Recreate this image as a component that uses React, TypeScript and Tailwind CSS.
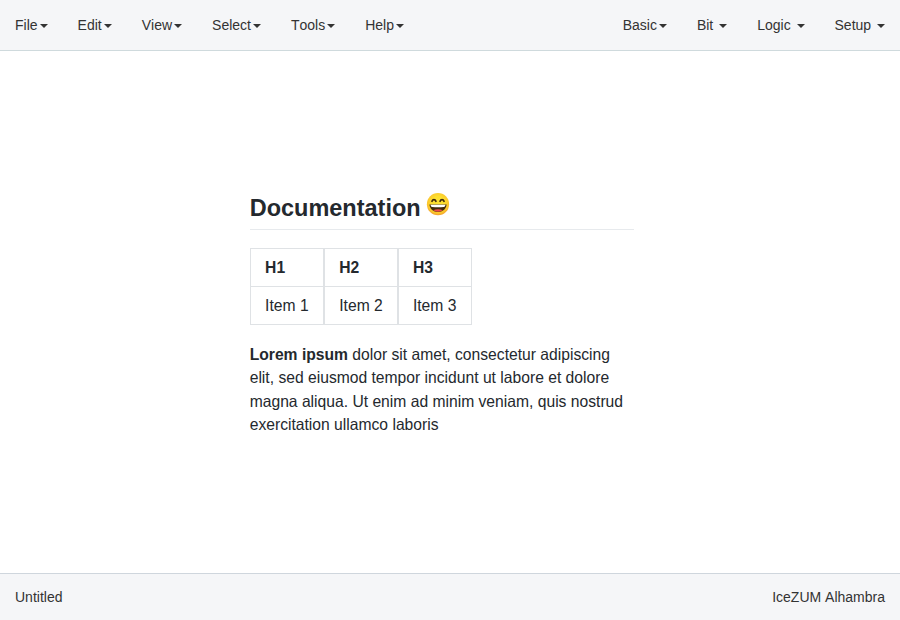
import React from "react";

const left = ["File", "Edit", "View", "Select", "Tools", "Help"];
const right = ["Basic", "Bit ", "Logic ", "Setup "];

function Menu({ label }: { label: string }) {
  return (
    <li className="flex items-center whitespace-pre px-[15px] py-[15px]">
      <span>{label}</span>
      <span className="ml-[2px] mt-[2px] h-0 w-0 border-x-4 border-t-4 border-x-transparent border-t-[#333]" />
    </li>
  );
}

function Smile() {
  return (
    <svg className="ml-[5.5px] mt-[2px] h-6 w-6" viewBox="0 0 24 24">
      <defs>
        <radialGradient id="face" cx="50%" cy="42%" r="58%">
          <stop offset="0.45" stopColor="#fde030" />
          <stop offset="0.85" stopColor="#fbc32c" />
          <stop offset="1" stopColor="#f09a2b" />
        </radialGradient>
      </defs>
      <circle cx="12" cy="12.2" r="11.1" fill="url(#face)" />
      <path d="M6 9.2C6.8 7.1 9.1 7.1 9.9 9.2M14.1 9.2c.8-2.1 3.1-2.1 3.9 0" fill="none" stroke="#422b0d" strokeWidth="1.8" strokeLinecap="round" />
      <path d="M3.4 12.5h17.2c-.5 4.6-4 7.5-8.6 7.5s-8.1-2.9-8.6-7.5z" fill="#422b0d" />
      <path d="M7.2 18.3c2.7-1.5 6.9-1.5 9.6 0-2.6 1.9-7 1.9-9.6 0z" fill="#ed4b4b" />
      <path d="M4.6 12.8h14.8c0 1.3-.5 2-1.6 2.1-3.8.4-7.8.4-11.6 0-1.1-.1-1.6-.8-1.6-2.1z" fill="#fff" />
    </svg>
  );
}

export default function App() {
  return (
    <div className="flex h-[620px] w-[900px] flex-col overflow-hidden bg-white font-['Liberation_Sans',Arial,sans-serif] text-sm leading-5 text-[#333] [font-kerning:none]">
      <nav className="flex h-[51px] justify-between border-b border-[#cfdadd] bg-[#f5f6f8]">
        <ul className="flex">{left.map((l) => <Menu key={l} label={l} />)}</ul>
        <ul className="flex">{right.map((l) => <Menu key={l} label={l} />)}</ul>
      </nav>
      <main className="flex-1 pl-[249.7px] pt-[139px] text-[15.66px] leading-[23.49px] text-[#24292e]">
        <article className="w-[384px]">
          <h2 className="flex h-[40px] items-start border-b border-[#e7eaed] text-[23.49px] font-bold leading-9">
            <span>Documentation</span>
            <Smile />
          </h2>
          <table className="mt-[18px] w-[222px] table-fixed border-collapse">
            <thead>
              <tr>{["H1", "H2", "H3"].map((h) => <th key={h} className="h-[38px] border border-[#dfe2e5] p-0 pl-[14.4px] text-left font-bold not-first:border-l-2">{h}</th>)}</tr>
            </thead>
            <tbody>
              <tr>{["Item 1", "Item 2", "Item 3"].map((h) => <td key={h} className="h-[38px] border border-[#dfe2e5] p-0 pl-[14.4px] not-first:border-l-2">{h}</td>)}</tr>
            </tbody>
          </table>
          <p className="mt-[17.6px]"><strong>Lorem ipsum</strong> dolor sit amet, consectetur adipiscing elit, sed eiusmod tempor incidunt ut labore et dolore magna aliqua. Ut enim ad minim veniam, quis nostrud exercitation ullamco laboris</p>
        </article>
      </main>
      <footer className="flex h-[47px] items-center justify-between border-t border-[#cfd6dd] bg-[#f5f6f8] px-[15px]">
        <span>Untitled</span>
        <span>IceZUM Alhambra</span>
      </footer>
    </div>
  );
}
